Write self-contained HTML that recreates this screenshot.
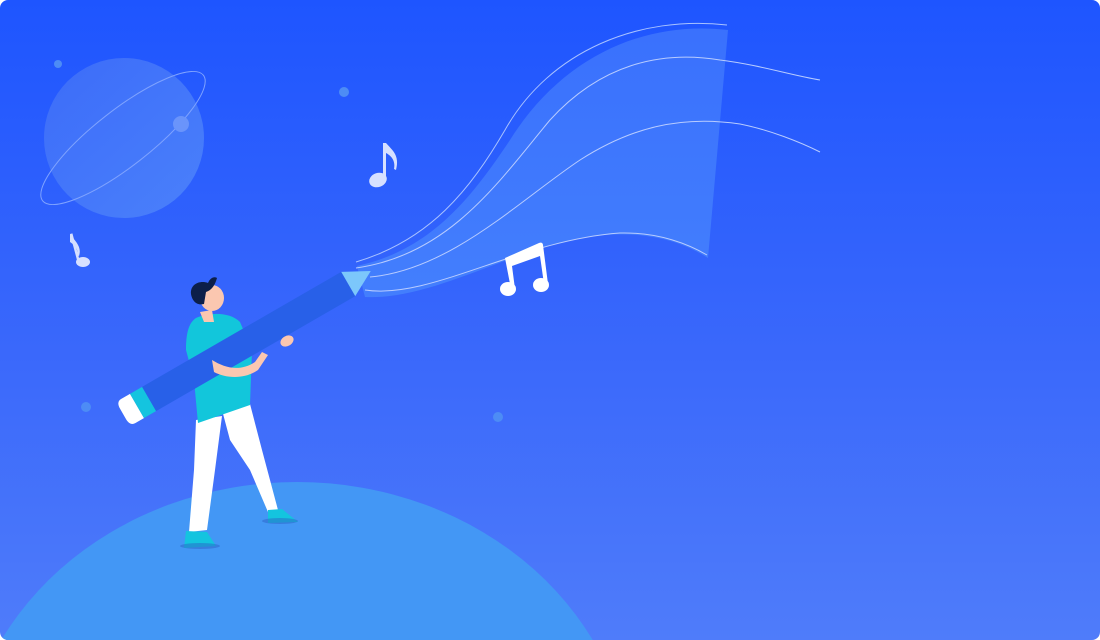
<!DOCTYPE html>
<html><head><style>
html,body{margin:0;padding:0;background:#fff;width:1100px;height:640px;overflow:hidden;}
.c{position:absolute;left:0;top:0;width:1100px;height:640px;border-radius:8px;overflow:hidden;background:linear-gradient(180deg,#1e55ff 0%,#3a68fb 55%,#4f7cfa 100%);}
svg{position:absolute;left:0;top:0}
</style></head><body>
<div class="c">
<svg width="1100" height="640" viewBox="0 0 1100 640">
<defs>
<linearGradient id="pl" x1="0" y1="0" x2="1" y2="1"><stop offset="0" stop-color="#3f6ef8"/><stop offset="1" stop-color="#4d84fb"/></linearGradient>
<linearGradient id="wv" x1="0" y1="0" x2="0" y2="1"><stop offset="0" stop-color="#3b72fd"/><stop offset="1" stop-color="#4480fd"/></linearGradient>
</defs>
<circle cx="124" cy="138" r="80" fill="url(#pl)" opacity="0.9"/>
<ellipse cx="123" cy="138" rx="102" ry="28" transform="rotate(-38 123 138)" fill="none" stroke="#7fa3ff" stroke-width="1"/>
<circle cx="181" cy="124" r="8" fill="#6a94fb"/>
<circle cx="58" cy="64" r="4" fill="#4d8cf5"/>
<circle cx="344" cy="92" r="5" fill="#4d8cf5"/>
<circle cx="86" cy="407" r="5" fill="#4d8cf5"/>
<circle cx="498" cy="417" r="5" fill="#4d8cf5"/>
<ellipse cx="297" cy="780" rx="335" ry="298" fill="#4397f5"/>
<path d="M357 266 C430 250 470 200 510 140 C560 60 640 20 728 30 L708 258 C680 240 640 228 580 238 C500 255 430 300 365 297 Z" fill="url(#wv)" opacity="0.95"/>
<path d="M356 262 C430 240 470 190 505 130 C550 50 640 15 727 25" fill="none" stroke="#a9c2ff" stroke-width="1"/>
<path d="M356 268 C450 255 500 180 550 120 C600 65 660 50 720 60 C760 65 790 75 820 80" fill="none" stroke="#b8ccff" stroke-width="1"/>
<path d="M370 277 C450 270 520 200 580 160 C630 128 680 115 740 124 C770 130 800 142 820 152" fill="none" stroke="#b8ccff" stroke-width="1"/>
<path d="M365 290 C430 300 520 240 620 233 C660 232 690 245 707 255" fill="none" stroke="#b8ccff" stroke-width="1"/>
<g fill="#d6e0ff"><ellipse cx="378" cy="180" rx="9" ry="7" transform="rotate(-20 378 180)"/><rect x="383" y="143" width="3" height="37"/><path d="M386 143 C392 150 400 155 396 170 L394 169 C396 160 390 155 386 153Z"/></g>
<g fill="#d6e0ff"><ellipse cx="83" cy="262" rx="7" ry="5"/><rect x="70" y="234" width="2.5" height="28" transform="rotate(-15 70 234)"/><path d="M70 234 C76 242 82 247 79 256 L77 255 C79 248 73 244 70 242Z"/></g>
<g fill="#fff"><ellipse cx="508" cy="289" rx="8" ry="7"/><ellipse cx="541" cy="285" rx="8" ry="7"/><path d="M505 258 L539 243 C541 242 543 243 543 245 L548 284 L544 284 L540 256 L512 266 L515 289 L511 289 Z"/></g>
<path d="M196 420 L222 416 L215 470 L207 530 L189 532 L194 470 Z" fill="#fff"/>
<path d="M222 410 L250 404 L262 450 L278 510 L268 512 L250 470 L230 440 Z" fill="#fff"/>
<path d="M186 531 L207 532 L216 546 L184 548 Z" fill="#14c4df"/>
<path d="M268 510 L282 509 L298 522 L268 523 Z" fill="#14c4df"/>
<ellipse cx="200" cy="546" rx="20" ry="3" fill="#2c63c8" opacity="0.5"/>
<ellipse cx="280" cy="521" rx="18" ry="3" fill="#2c63c8" opacity="0.5"/>
<path d="M196 318 C210 312 230 312 240 322 L252 350 L250 405 L198 423 L194 380 L186 350 C186 330 190 322 196 318Z" fill="#12c6db"/>
<path d="M200 312 L212 310 L214 322 L204 322Z" fill="#fbc7b0"/>
<ellipse cx="212" cy="298" rx="12" ry="13" fill="#fbc7b0"/>
<path d="M191 294 C190 284 200 280 208 283 C210 278 214 276 217 278 C215 285 212 290 206 292 L204 304 C196 306 192 300 191 294Z" fill="#0c1f4a"/>
<g transform="translate(130,410) rotate(-30)">
<rect x="0" y="-14" width="252" height="28" fill="#2860e8"/>
<rect x="8" y="-14" width="14" height="28" fill="#14c4df"/>
<path d="M8 -14 L-2 -14 Q-8 -14 -8 -6 L-8 6 Q-8 14 -2 14 L8 14Z" fill="#fff"/>
<path d="M252 -14 L252 14 L278 0Z" fill="#7cc7fb"/>
</g>
<path d="M212 360 C225 368 240 372 255 362 L262 352 L268 355 L258 370 C244 380 225 378 214 372Z" fill="#fbc7b0"/>
<ellipse cx="287" cy="341" rx="7" ry="5" transform="rotate(-30 287 341)" fill="#fbc7b0"/>
</svg>
</div>
</body></html>
